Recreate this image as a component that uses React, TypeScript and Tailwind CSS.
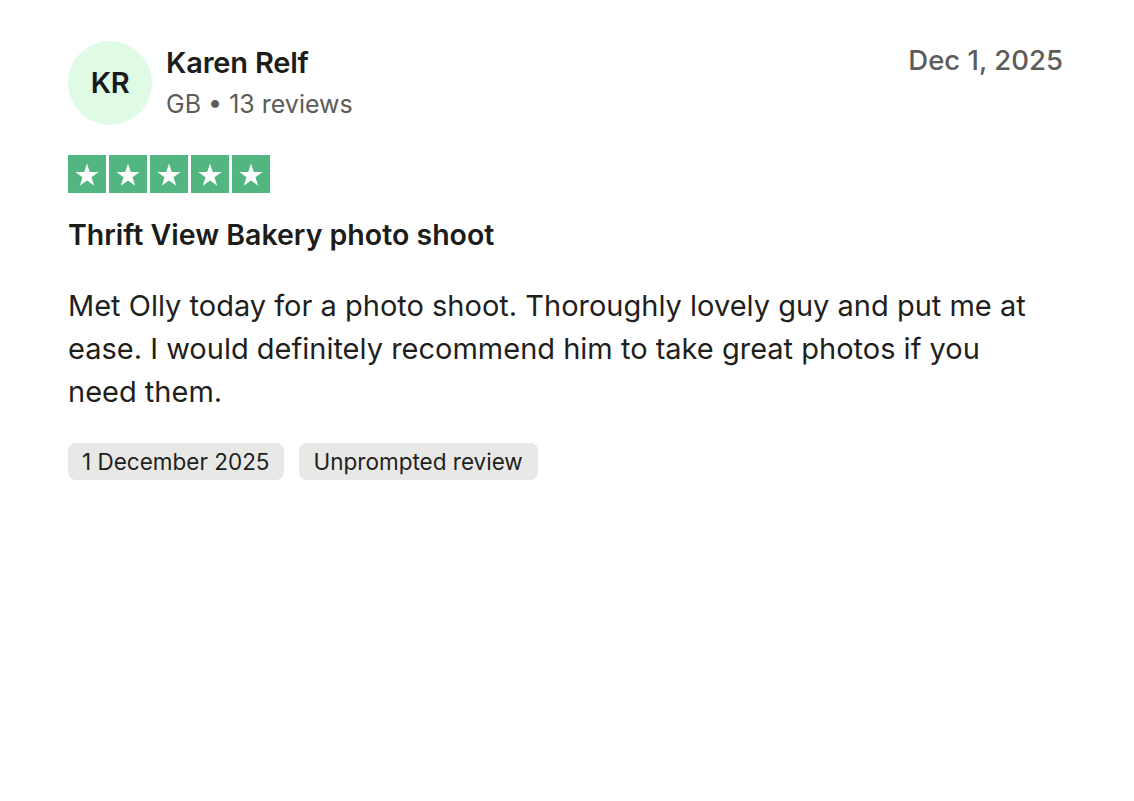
import React from "react";

function Star() {
  return (
    <div className="flex h-[38px] w-[38px] items-center justify-center bg-[#51b67f]">
      <svg viewBox="0 0 24 24" width="26" height="26">
        <path
          d="M12 2.2l2.55 7.85h8.25l-6.68 4.85 2.55 7.85L12 17.9l-6.67 4.85 2.55-7.85L1.2 10.05h8.25z"
          fill="#ffffff"
        />
      </svg>
    </div>
  );
}

export default function App() {
  return (
    <div
      className="min-h-[801px] w-full bg-white text-[#1c1c1a]"
      style={{ fontFamily: "Inter, 'Noto Sans', sans-serif" }}
    >
      <div className="flex flex-col pl-[68px] pr-[71px] pt-[41px]">
        <div className="flex items-start justify-between">
          <div className="flex items-center gap-[14px]">
            <div className="flex h-[84px] w-[84px] items-center justify-center rounded-full bg-[#dffbe5]">
              <span className="text-[29px] font-semibold tracking-[-0.3px] text-[#1a1a1a]">KR</span>
            </div>
            <div className="-mt-[2px] flex flex-col">
              <span className="text-[29px] font-semibold leading-[38px] tracking-[-0.2px]">Karen Relf</span>
              <span className="mt-[6px] text-[25px] leading-[32px] tracking-[0px] text-[#5c5c58]">GB • 13 reviews</span>
            </div>
          </div>
          <span className="mt-[1px] text-[27.5px] font-medium leading-[36px] tracking-[0px] text-[#5c5c58]">Dec 1, 2025</span>
        </div>

        <div className="mt-[30px] flex gap-[3px]">
          <Star />
          <Star />
          <Star />
          <Star />
          <Star />
        </div>

        <h2 className="mt-[22px] text-[28.5px] font-semibold leading-[40px] tracking-[0px]">
          Thrift View Bakery photo shoot
        </h2>

        <p className="mt-[29px] max-w-[975px] text-[29px] leading-[43px] tracking-[0px] text-[#1f1f1d]">
          Met Olly today for a photo shoot. Thoroughly lovely guy and put me at ease. I would definitely recommend him to take great photos if you need them.
        </p>

        <div className="mt-[30px] flex gap-[15px]">
          <span className="flex h-[37px] items-center rounded-[8px] bg-[#e8e8e6] px-[14px] text-[22.5px] tracking-[0px] text-[#1f1f1d]">
            1 December 2025
          </span>
          <span className="flex h-[37px] items-center rounded-[8px] bg-[#e8e8e6] px-[15px] text-[22.5px] tracking-[0px] text-[#1f1f1d]">
            Unprompted review
          </span>
        </div>
      </div>
    </div>
  );
}
